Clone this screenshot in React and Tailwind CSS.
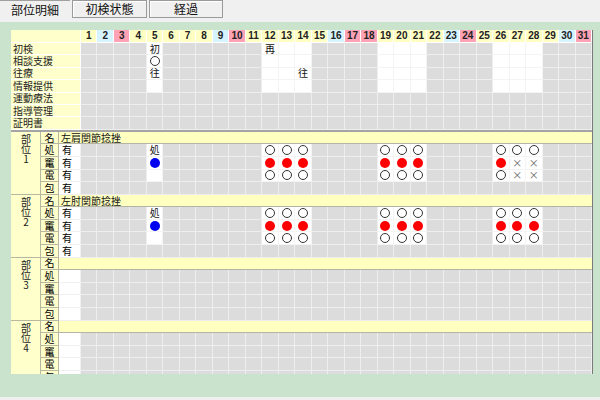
import React from "react"

const DAYS = Array.from({ length: 31 }, (_, i) => i + 1)
const BLUE = [2, 9, 16, 23, 30]
const PINK = [3, 10, 17, 18, 24, 31]
const OPEN = [5, 12, 13, 14, 19, 20, 21, 26, 27, 28]

const TOP_ROWS = ["初検", "相談支援", "往療", "情報提供", "運動療法", "指導管理", "証明書"]
const TOP_MARKS = {
  0: { 5: "初", 12: "再" },
  1: { 5: "o" },
  2: { 5: "往", 14: "往" },
}

const SUB = ["処", "竃", "電", "包"]

const fill = (days, v) => Object.fromEntries(days.map((d) => [d, v]))
const REST = [12, 13, 14, 19, 20, 21, 26, 27, 28]

const PARTS = [
  {
    no: "1",
    name: "左肩関節捻挫",
    has: true,
    marks: [
      { 5: "処", ...fill(REST, "o") },
      { 5: "blue", ...fill([12, 13, 14, 19, 20, 21, 26], "red"), 27: "x", 28: "x" },
      { ...fill([12, 13, 14, 19, 20, 21, 26], "o"), 27: "x", 28: "x" },
      {},
    ],
  },
  {
    no: "2",
    name: "左肘関節捻挫",
    has: true,
    marks: [
      { 5: "処", ...fill(REST, "o") },
      { 5: "blue", ...fill(REST, "red") },
      fill(REST, "o"),
      {},
    ],
  },
  { no: "3", name: "", has: false, marks: [{}, {}, {}, {}], closed: true },
  { no: "4", name: "", has: false, marks: [{}, {}, {}, {}], closed: true },
]

const jp = "font-['Noto_Sans_CJK_JP',sans-serif]"

function Mark({ v }) {
  if (!v) return null
  if (v === "o") return <span className="w-[10px] h-[10px] rounded-full border-[1.5px] border-[#333]" />
  if (v === "red") return <span className="w-[10px] h-[10px] rounded-full bg-[#ff0000]" />
  if (v === "blue") return <span className="w-[10px] h-[10px] rounded-full bg-[#0000ee]" />
  if (v === "x") return <span className="text-[10px] leading-none text-[#666]">×</span>
  return <span className={`text-[10px] leading-none text-[#111] ${jp}`}>{v}</span>
}

function DayCells({ open, marks = {} }) {
  return (
    <div className="grid flex-1 grid-cols-[repeat(31,minmax(0,1fr))]">
      {DAYS.map((d) => (
        <div
          key={d}
          className={`flex items-center justify-center border-r border-b ${
            open && OPEN.includes(d) ? "bg-white border-[#f4f4f4]" : "bg-[#dcdcdc] border-[#eeeeee]"
          }`}
        >
          <Mark v={marks[d]} />
        </div>
      ))}
    </div>
  )
}

function Header() {
  return (
    <div className="flex h-[13px] shrink-0">
      <div className="w-[70px] bg-[#ffffcc] border-r border-b border-white" />
      <div className="grid flex-1 grid-cols-[repeat(31,minmax(0,1fr))]">
        {DAYS.map((d) => {
          const bg = BLUE.includes(d) ? "bg-[#d6f4ff]" : PINK.includes(d) ? "bg-[#ffa2b6]" : "bg-[#ffffc4]"
          return (
            <div
              key={d}
              className={`${bg} flex items-center justify-center border-r border-b border-white text-[10px] font-bold leading-none text-[#222] font-['Liberation_Sans',sans-serif]`}
            >
              {d}
            </div>
          )
        })}
      </div>
    </div>
  )
}

function Part({ part }) {
  return (
    <div className="flex shrink-0">
      <div className={`w-[30px] bg-[#ffffcc] border-r border-b border-[#b8b8a0] flex justify-center pt-[2px] text-[#222] ${jp}`}>
        <span className="[writing-mode:vertical-rl] [text-orientation:upright] text-[10px] leading-[10px]">
          部位{part.no}
        </span>
      </div>
      <div className="flex-1 flex flex-col">
        <div className="flex h-[12.6px] shrink-0">
          <div className={`w-[18px] bg-[#ffffcc] border-r border-b border-[#b8b8a0] flex items-center justify-center text-[10px] leading-none ${jp}`}>
            名
          </div>
          <div className={`flex-1 bg-[#ffffc0] border-b border-[#b4b4a4] flex items-center pl-[2px] text-[10px] leading-none text-[#111] ${jp}`}>
            {part.name}
          </div>
        </div>
        {SUB.map((s, i) => (
          <div key={s} className="flex h-[12.6px] shrink-0">
            <div className={`w-[18px] bg-[#ffffcc] border-r border-b border-[#b8b8a0] flex items-center justify-center text-[10px] leading-none ${jp}`}>
              {s}
            </div>
            <div className={`w-[22px] bg-white border-r border-b border-[#f0f0f0] flex items-center pl-[3px] text-[10px] leading-none ${jp}`}>
              {part.has ? "有" : ""}
            </div>
            <DayCells open={!part.closed && i < 3} marks={part.marks[i]} />
          </div>
        ))}
      </div>
    </div>
  )
}

export default function App() {
  return (
    <div className={`w-[600px] h-[400px] bg-[#f0f0f0] flex flex-col overflow-hidden ${jp}`}>
      <div className="h-[22px] shrink-0 flex items-start text-[12px] text-[#111]">
        <div className="w-[70px] h-[18px] border-t border-[#a0a0a0] flex items-center justify-center">部位明細</div>
        <div className="ml-[2px] w-[75px] h-[18px] border border-[#9a9a9a] shadow-[inset_1px_1px_0_#ffffff] flex items-center justify-center">
          初検状態
        </div>
        <div className="ml-[2px] w-[74px] h-[18px] border border-[#9a9a9a] shadow-[inset_1px_1px_0_#ffffff] flex items-center justify-center">
          経過
        </div>
      </div>

      <div className="h-[375px] shrink-0 bg-[#c9e3cc] pl-[11px] pt-[8px]">
        <div className="w-[582px] h-[344px] overflow-hidden border-r border-[#7a7a7a] flex flex-col">
          <Header />
          {TOP_ROWS.map((label, i) => (
            <div key={label} className="flex h-[12.4px] shrink-0">
              <div className="w-[70px] bg-[#ffffcc] border-r border-b border-white flex items-center pl-[2px] text-[10px] leading-none text-[#222]">
                {label}
              </div>
              <DayCells open={i < 4} marks={TOP_MARKS[i]} />
            </div>
          ))}
          <div className="h-[2px] shrink-0 bg-[#a4a4a4]" />
          {PARTS.map((p) => (
            <Part key={p.no} part={p} />
          ))}
        </div>
      </div>

      <div className="flex-1 bg-[#f0f0f0]" />
    </div>
  )
}
